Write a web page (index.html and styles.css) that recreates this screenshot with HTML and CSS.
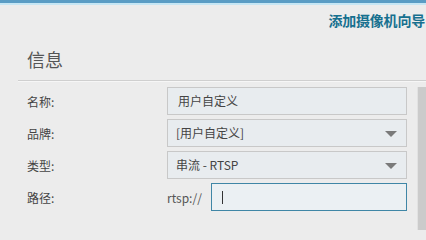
FILE: index.html
```html
<!DOCTYPE html>
<html lang="zh">
<head>
<meta charset="utf-8">
<title>添加摄像机向导</title>
<link rel="stylesheet" href="styles.css">
</head>
<body>
<div class="topbar"></div>
<div class="header"><span class="wizard">添加摄像机向导</span></div>
<div class="title">信息</div>
<div class="divider"></div>
<div class="main">
  <div class="form">
    <div class="row">
      <div class="label">名称:</div>
      <div class="field">用户自定义</div>
    </div>
    <div class="row">
      <div class="label">品牌:</div>
      <div class="field select">[用户自定义]<span class="arrow"></span></div>
    </div>
    <div class="row">
      <div class="label">类型:</div>
      <div class="field select">串流 - RTSP<span class="arrow"></span></div>
    </div>
    <div class="row">
      <div class="label">路径:</div>
      <div class="path">
        <span class="prefix">rtsp://</span>
        <div class="field focus"><span class="caret"></span></div>
      </div>
    </div>
  </div>
  <div class="scrollbar"></div>
</div>
</body>
</html>
```
FILE: styles.css
```css
html, body {
  margin: 0;
  padding: 0;
}
body {
  width: 426px;
  height: 230px;
  overflow: hidden;
  background: #ececec;
  font-family: "Noto Sans CJK SC", "Noto Sans", sans-serif;
  color: #444;
}
.topbar {
  height: 3px;
  background: #5a9cc4;
  border-bottom: 2px solid #c6e6f4;
}
.header {
  display: flex;
  justify-content: flex-end;
  padding-top: 5px;
  padding-right: 1px;
}
.wizard {
  font-size: 14px;
  line-height: 20px;
  font-weight: bold;
  color: #17708f;
  letter-spacing: -0.2px;
}
.title {
  margin-top: 17px;
  padding-left: 27px;
  font-size: 18px;
  line-height: 24px;
  color: #555;
}
.divider {
  margin-top: 9px;
  margin-left: 18px;
  height: 0;
  border-top: 1px solid #cfcfcf;
  border-bottom: 1px solid #f6f6f6;
}
.main {
  display: flex;
}
.form {
  flex: 1;
  padding-top: 5px;
}
.row {
  display: flex;
  align-items: center;
  height: 28px;
  margin-bottom: 4px;
}
.label {
  flex: none;
  width: 167px;
  box-sizing: border-box;
  padding-left: 27px;
  font-size: 12px;
  color: #444;
}
.field {
  flex: none;
  position: relative;
  width: 240px;
  height: 28px;
  box-sizing: border-box;
  border: 1px solid #c8c8c8;
  background: #e8ecef;
  padding-left: 10px;
  font-size: 12px;
  line-height: 26px;
  color: #444;
}
.select {
  padding-left: 8px;
}
.arrow {
  position: absolute;
  right: 9px;
  top: 11px;
  width: 0;
  height: 0;
  border-left: 6px solid transparent;
  border-right: 6px solid transparent;
  border-top: 6px solid #7a7a7a;
}
.path {
  display: flex;
  align-items: center;
}
.prefix {
  width: 44px;
  font-size: 12px;
  color: #555;
}
.field.focus {
  width: 196px;
  border-color: #3f86a6;
  background: #ebf0f3;
  display: flex;
  align-items: center;
}
.caret {
  width: 1px;
  height: 13px;
  background: #333;
}
.scrollbar {
  flex: none;
  width: 8px;
  margin-left: 9px;
  margin-top: 5px;
  height: 150px;
  background: #cbcbcb;
  border-left: 1px solid #e2e2e2;
}
```
